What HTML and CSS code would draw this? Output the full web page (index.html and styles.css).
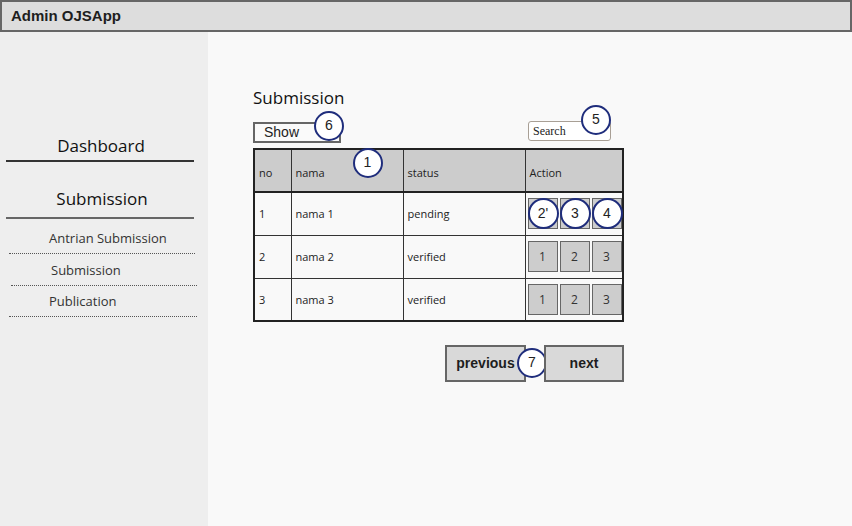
FILE: index.html
```html
<!DOCTYPE html>
<html>
<head>
<meta charset="utf-8">
<link rel="stylesheet" href="styles.css">
</head>
<body>
<div class="app">
  <header class="topbar">Admin OJSApp</header>
  <div class="body">
    <aside class="sidebar">
      <div class="nav-main nav-dashboard">Dashboard</div>
      <div class="nav-main nav-submission">Submission</div>
      <div class="nav-sub nav-sub-1">Antrian Submission</div>
      <div class="nav-sub nav-sub-2">Submission</div>
      <div class="nav-sub nav-sub-3">Publication</div>
    </aside>
    <main class="main">
      <div class="content">
        <h1 class="title">Submission</h1>
        <div class="toolbar">
          <div class="show">Show<span class="badge badge-6">6</span></div>
          <div class="search">Search<span class="badge badge-5">5</span></div>
        </div>
        <table class="grid">
          <colgroup>
            <col class="c-no"><col class="c-nama"><col class="c-status"><col class="c-action">
          </colgroup>
          <thead>
            <tr>
              <th>no</th>
              <th class="rel">nama<span class="badge badge-1">1</span></th>
              <th>status</th>
              <th>Action</th>
            </tr>
          </thead>
          <tbody>
            <tr>
              <td>1</td><td>nama 1</td><td>pending</td>
              <td class="actions">
                <div class="btns">
                  <span class="act"><span class="badge badge-on">2'</span></span>
                  <span class="act"><span class="badge badge-on">3</span></span>
                  <span class="act"><span class="badge badge-on">4</span></span>
                </div>
              </td>
            </tr>
            <tr>
              <td>2</td><td>nama 2</td><td>verified</td>
              <td class="actions">
                <div class="btns">
                  <span class="act">1</span><span class="act">2</span><span class="act">3</span>
                </div>
              </td>
            </tr>
            <tr>
              <td>3</td><td>nama 3</td><td>verified</td>
              <td class="actions">
                <div class="btns">
                  <span class="act">1</span><span class="act">2</span><span class="act">3</span>
                </div>
              </td>
            </tr>
          </tbody>
        </table>
        <div class="pager">
          <div class="pbtn prev">previous<span class="badge badge-7">7</span></div>
          <div class="pbtn">next</div>
        </div>
      </div>
    </main>
  </div>
</div>
</body>
</html>
```

FILE: styles.css
```css
* { box-sizing: border-box; }
html, body { margin: 0; padding: 0; }
body {
  width: 852px;
  height: 526px;
  overflow: hidden;
  background: #f9f9f9;
  font-family: "Open Sans", "DejaVu Sans", sans-serif;
  color: #222;
}
.app { display: flex; flex-direction: column; height: 526px; }
.topbar {
  height: 32px;
  border: 2px solid #666;
  background: #dddddd;
  font-family: "Liberation Sans", Arial, sans-serif;
  font-weight: bold;
  font-size: 15px;
  line-height: 28px;
  padding-left: 9px;
  color: #1e1e1e;
}
.body { flex: 1; display: flex; }
.sidebar {
  width: 208px;
  background: #eeeeee;
  padding-top: 104px;
}
.nav-main {
  font-size: 17px;
  line-height: 20px;
  text-align: center;
  margin-left: 6px;
  width: 188px;
  color: #111;
}
.nav-dashboard {
  padding-bottom: 4px;
  border-bottom: 2px solid #333;
  padding-left: 2px;
}
.nav-submission {
  margin-top: 27px;
  padding-bottom: 8px;
  border-bottom: 2px solid #666;
  padding-left: 4px;
}
.nav-sub {
  font-size: 13px;
  line-height: 16px;
  color: #333;
  width: 186px;
  border-bottom: 1px dotted #555;
  padding-bottom: 7px;
}
.nav-sub-1 { margin-top: 11px; margin-left: 9px; padding-left: 40px; }
.nav-sub-2 { margin-top: 8px; margin-left: 11px; padding-left: 40px; }
.nav-sub-3 { margin-top: 7px; margin-left: 9px; padding-left: 40px; width: 188px; }

.main { flex: 1; padding: 56px 0 0 45px; }
.content { width: 371px; display: flex; flex-direction: column; }
.title {
  margin: 0;
  font-size: 17px;
  font-weight: normal;
  line-height: 20px;
  color: #111;
}
.toolbar {
  margin-top: 14px;
  display: flex;
  justify-content: space-between;
  align-items: flex-start;
  height: 26px;
}
.show {
  position: relative;
  width: 88px;
  height: 21px;
  border: 2px solid #666;
  background: #fafafa;
  font-family: "Liberation Sans", Arial, sans-serif;
  font-size: 14px;
  line-height: 17px;
  padding-left: 9px;
  color: #222;
}
.search {
  position: relative;
  margin-top: -1px;
  margin-right: 13px;
  width: 83px;
  height: 20px;
  border: 1px solid #a89f95;
  border-radius: 3px;
  background: #fff;
  font-family: "Liberation Serif", "Times New Roman", serif;
  font-size: 12px;
  line-height: 18px;
  padding-left: 4px;
  color: #222;
}
.grid {
  border-collapse: collapse;
  width: 369px;
  table-layout: fixed;
  font-size: 11px;
  border: 2px solid #222;
}
.c-no { width: 37px; }
.c-nama { width: 112px; }
.c-status { width: 122px; }
.c-action { width: 98px; }
.grid th, .grid td {
  border: 1px solid #333;
  text-align: left;
  font-weight: normal;
  padding: 0 0 0 4px;
  vertical-align: middle;
  color: #222;
}
.grid th {
  background: #cccccc;
  height: 43px;
  padding-top: 4px;
  border-bottom: 2px solid #222;
}
.grid td { height: 43px; background: #f9f9f9; }
.rel { position: relative; }
.grid td.actions { padding: 0 0 0 2px; }
.btns { display: flex; gap: 2px; }
.act {
  position: relative;
  display: flex;
  align-items: center;
  justify-content: center;
  width: 30px;
  height: 31px;
  background: #cdcdcd;
  border: 1px solid #666;
  font-size: 12px;
  color: #333;
}
.pager {
  margin-top: 23px;
  display: flex;
  justify-content: flex-end;
  gap: 18px;
}
.pbtn {
  position: relative;
  width: 80px;
  height: 37px;
  border: 2px solid #666;
  background: #d9d9d9;
  font-family: "Liberation Sans", Arial, sans-serif;
  font-weight: bold;
  font-size: 14px;
  line-height: 33px;
  text-align: center;
  color: #1e1e1e;
}
.prev { width: 81px; }
.badge {
  position: absolute;
  width: 30px;
  height: 30px;
  border-radius: 50%;
  border: 2px solid #1f2d7c;
  background: #fff;
  font-family: "Liberation Sans", Arial, sans-serif;
  font-weight: normal;
  font-size: 14px;
  line-height: 24px;
  text-align: center;
  color: #222;
}
.badge-6 { left: 59px; top: -13px; }
.badge-5 { left: 52px; top: -17px; }
.badge-1 { left: 61px; top: -2px; }
.badge-on { left: -1px; top: -1px; width: 31px; height: 31px; line-height: 26px; }
.badge-7 { left: 70px; top: 1px; }
```
